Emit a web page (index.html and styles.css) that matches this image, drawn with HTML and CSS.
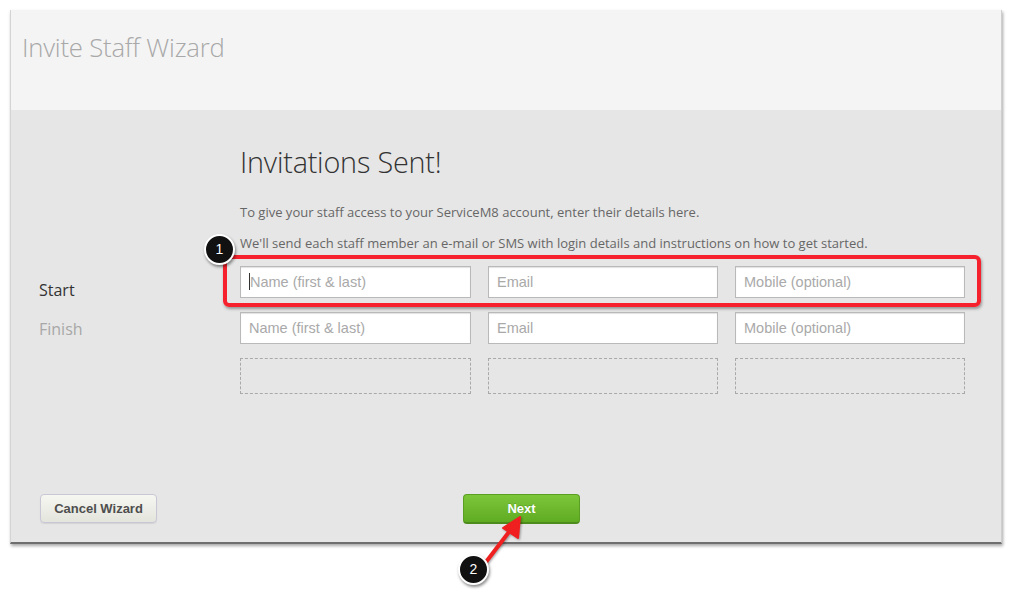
FILE: index.html
```html
<!DOCTYPE html>
<html>
<head>
<meta charset="utf-8">
<link rel="stylesheet" href="styles.css">
</head>
<body>
<div class="page">
  <div class="panel">
    <div class="panel-header">
      <h1 class="title">Invite Staff Wizard</h1>
    </div>
    <div class="panel-body">
      <div class="main">
        <nav class="steps">
          <div class="step step-active">Start</div>
          <div class="step step-inactive">Finish</div>
        </nav>
        <div class="content">
          <h2 class="heading">Invitations Sent!</h2>
          <p class="text">To give your staff access to your ServiceM8 account, enter their details here.</p>
          <p class="text">We'll send each staff member an e-mail or SMS with login details and instructions on how to get started.</p>
          <div class="rows">
            <div class="row">
              <div class="field"><span class="caret"></span>Name (first &amp; last)</div>
              <div class="field">Email</div>
              <div class="field">Mobile (optional)</div>
            </div>
            <div class="row">
              <div class="field">Name (first &amp; last)</div>
              <div class="field">Email</div>
              <div class="field">Mobile (optional)</div>
            </div>
            <div class="row">
              <div class="slot"></div>
              <div class="slot"></div>
              <div class="slot"></div>
            </div>
          </div>
        </div>
      </div>
      <div class="actions">
        <button class="btn btn-cancel">Cancel Wizard</button>
        <button class="btn btn-next">Next</button>
      </div>
    </div>
  </div>

  <div class="highlight"></div>
  <div class="badge badge-1">1</div>
  <svg class="arrow" width="60" height="60" viewBox="0 0 60 60">
    <line x1="10" y1="48" x2="36" y2="14" stroke="#f02020" stroke-width="4" stroke-linecap="round"/>
    <polygon points="44,3 42,24 27,14" fill="#f02020" stroke="#f02020" stroke-width="2" stroke-linejoin="round"/>
  </svg>
  <div class="badge badge-2">2</div>
</div>
</body>
</html>
```

FILE: styles.css
```css
* { box-sizing: border-box; }
html, body { margin: 0; padding: 0; background: #ffffff; }
body { font-family: "Open Sans", "Liberation Sans", sans-serif; }

.page {
  position: relative;
  width: 1012px;
  height: 613px;
  padding: 10px 10px 0 10px;
}

.panel {
  width: 992px;
  height: 534px;
  display: flex;
  flex-direction: column;
  border-left: 1px solid #d4d4d4;
  border-right: 1px solid #cfcfcf;
  border-bottom: 2px solid #6e6e6e;
  box-shadow: 1px 2px 3px rgba(0,0,0,0.35);
}

.panel-header {
  height: 100px;
  background: #f4f4f4;
  padding: 23px 0 0 11px;
}

.title {
  margin: 0;
  font-size: 25.7px;
  font-weight: 300;
  color: #a8a8a8;
  line-height: 30px;
  letter-spacing: -0.2px;
}

.panel-body {
  flex: 1;
  background: #e6e6e6;
  display: flex;
  flex-direction: column;
}

.main {
  display: flex;
  flex: 1;
}

.steps {
  width: 229px;
  padding: 169px 0 0 28px;
  display: flex;
  flex-direction: column;
  gap: 16px;
}

.step {
  font-size: 16px;
  line-height: 23px;
}
.step-active { color: #333333; }
.step-inactive { color: #a8a8a8; }

.content {
  padding-top: 33px;
}

.heading {
  margin: 0 0 22px 0;
  font-size: 28.8px;
  font-weight: 300;
  color: #333333;
  line-height: 38px;
  letter-spacing: -0.2px;
}

.text {
  margin: 0 0 12px 0;
  font-size: 13px;
  line-height: 19px;
  color: #666666;
}

.rows {
  display: flex;
  flex-direction: column;
  gap: 14px;
  padding-top: 1px;
}

.row {
  display: flex;
  gap: 17px;
}

.field {
  position: relative;
  width: 231px;
  height: 32px;
  background: #ffffff;
  border: 1px solid #b9b9b9;
  box-shadow: inset 0 1px 1px rgba(0,0,0,0.12);
  font-family: "Liberation Sans", Arial, sans-serif;
  font-size: 14.5px;
  color: #a9a9a9;
  line-height: 30px;
  padding-left: 8px;
}
.row .field:nth-child(2), .row .field:nth-child(3) { width: 230px; }

.caret {
  display: inline-block;
  width: 1px;
  height: 17px;
  background: #333;
  vertical-align: -3px;
  margin-right: 0;
}

.slot {
  width: 231px;
  height: 36px;
  border: 1px dashed #a9a9a9;
}
.row .slot:nth-child(2), .row .slot:nth-child(3) { width: 230px; }

.actions {
  display: flex;
  align-items: flex-start;
  padding: 0 0 18px 29px;
  gap: 306px;
}

.btn {
  font-family: "Liberation Sans", Arial, sans-serif;
  font-weight: bold;
  font-size: 13px;
  border-radius: 4px;
  cursor: pointer;
}

.btn-cancel {
  width: 117px;
  height: 29px;
  color: #4e4e4e;
  background: linear-gradient(#f7f7f2, #e3e4dc);
  border: 1px solid #c9c6d6;
  box-shadow: 0 1px 1px rgba(0,0,0,0.08);
}

.btn-next {
  width: 117px;
  height: 30px;
  color: #ffffff;
  background: linear-gradient(#7cc63a, #5fab22);
  border: 1px solid #5a9e22;
  border-bottom: 2px solid #4d8c1c;
  text-shadow: 0 -1px 0 rgba(0,0,0,0.15);
}

/* annotations */
.highlight {
  position: absolute;
  left: 223px;
  top: 255px;
  width: 758px;
  height: 52px;
  border: 4px solid #f5222d;
  border-radius: 6px;
  box-shadow: 1px 2px 3px rgba(0,0,0,0.35);
}

.badge {
  position: absolute;
  width: 31px;
  height: 31px;
  border-radius: 50%;
  background: #111111;
  border: 2px solid #ffffff;
  box-shadow: 1px 2px 3px rgba(0,0,0,0.45);
  color: #ffffff;
  font-family: "Liberation Sans", Arial, sans-serif;
  font-size: 14px;
  line-height: 27px;
  text-align: center;
}
.badge-1 { left: 204px; top: 234px; }
.badge-2 { left: 458px; top: 554px; }

.arrow {
  position: absolute;
  left: 476px;
  top: 514px;
  overflow: visible;
  filter: drop-shadow(1px 1px 1px rgba(0,0,0,0.35));
}
```
